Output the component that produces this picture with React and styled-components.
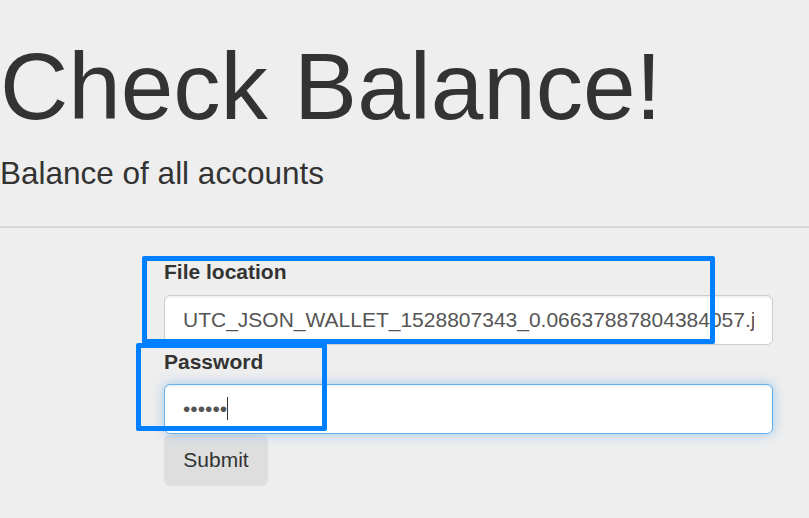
import React from "react";
import styled, { createGlobalStyle, css } from "styled-components";

const GlobalStyle = createGlobalStyle`
  html, body {
    margin: 0;
    padding: 0;
    background: #eeeeee;
  }
  body {
    font-family: "Liberation Sans", Arial, Helvetica, sans-serif;
    color: #333333;
  }
  * { box-sizing: border-box; }
`;

const Page = styled.div`
  position: relative;
  min-height: 518px;
  overflow: hidden;
`;

const Jumbotron = styled.header`
  padding-top: 34px;
`;

const Title = styled.h1`
  margin: 0;
  font-size: 94.5px;
  font-weight: 400;
  line-height: 104px;
  color: #333333;
  white-space: nowrap;
`;

const Lead = styled.p`
  margin: 12.6px 0 0;
  font-size: 31.5px;
  font-weight: 400;
  line-height: 45px;
  color: #333333;
`;

const Divider = styled.hr`
  margin: 30.4px 0 0;
  border: 0;
  height: 2px;
  background: #d6d6d6;
`;

const Form = styled.form`
  margin-left: 164px;
  width: 609px;
  padding-top: 29.5px;
`;

const Group = styled.div`
  margin-top: ${(p) => p.$gap || 0}px;
`;

const Label = styled.label`
  display: block;
  font-size: 21px;
  font-weight: 700;
  line-height: 30px;
  margin-bottom: 7.5px;
  color: #333333;
`;

const InputWrap = styled.div`
  position: relative;
`;

const Input = styled.input`
  display: block;
  width: 100%;
  height: 50px;
  padding: 0 18px;
  font-family: "Liberation Sans", Arial, Helvetica, sans-serif;
  font-size: 21px;
  color: #555555;
  background: #ffffff;
  border: 1px solid #cccccc;
  border-radius: 6px;
  box-shadow: inset 0 1.5px 1.5px rgba(0, 0, 0, 0.075);
  outline: none;
  ${(p) =>
    p.$focused &&
    css`
      border-color: #66afe9;
      box-shadow: inset 0 1.5px 1.5px rgba(0, 0, 0, 0.075),
        0 0 12px rgba(102, 175, 233, 0.6);
    `}
`;

const Caret = styled.span`
  position: absolute;
  left: 63px;
  top: 13px;
  width: 1px;
  height: 23px;
  background: #333333;
`;

const SubmitButton = styled.button`
  display: block;
  margin-top: 0.5px;
  width: 104px;
  height: 51px;
  padding: 0;
  font-family: "Liberation Sans", Arial, Helvetica, sans-serif;
  font-size: 21px;
  line-height: 30px;
  color: #333333;
  background: #dedede;
  border: 0;
  border-radius: 6px;
`;

const Annotation = styled.div`
  position: absolute;
  left: ${(p) => p.$x}px;
  top: ${(p) => p.$y}px;
  width: ${(p) => p.$w}px;
  height: ${(p) => p.$h}px;
  border: 5px solid #0080ff;
  border-radius: 2px;
  pointer-events: none;
`;

export default function App() {
  return (
    <Page>
      <GlobalStyle />
      <Jumbotron>
        <Title>Check Balance!</Title>
        <Lead>Balance of all accounts</Lead>
      </Jumbotron>
      <Divider />
      <Form onSubmit={(e) => e.preventDefault()}>
        <Group>
          <Label htmlFor="file">File location</Label>
          <Input
            id="file"
            type="text"
            readOnly
            defaultValue="UTC_JSON_WALLET_1528807343_0.06637887804384057.json"
          />
        </Group>
        <Group $gap={2}>
          <Label htmlFor="password">Password</Label>
          <InputWrap>
            <Input
              id="password"
              type="password"
              readOnly
              defaultValue="123456"
              $focused
            />
            <Caret />
          </InputWrap>
        </Group>
        <SubmitButton type="submit">Submit</SubmitButton>
      </Form>
      <Annotation $x={142} $y={256} $w={573} $h={88} />
      <Annotation $x={136} $y={343} $w={191} $h={88} />
    </Page>
  );
}
